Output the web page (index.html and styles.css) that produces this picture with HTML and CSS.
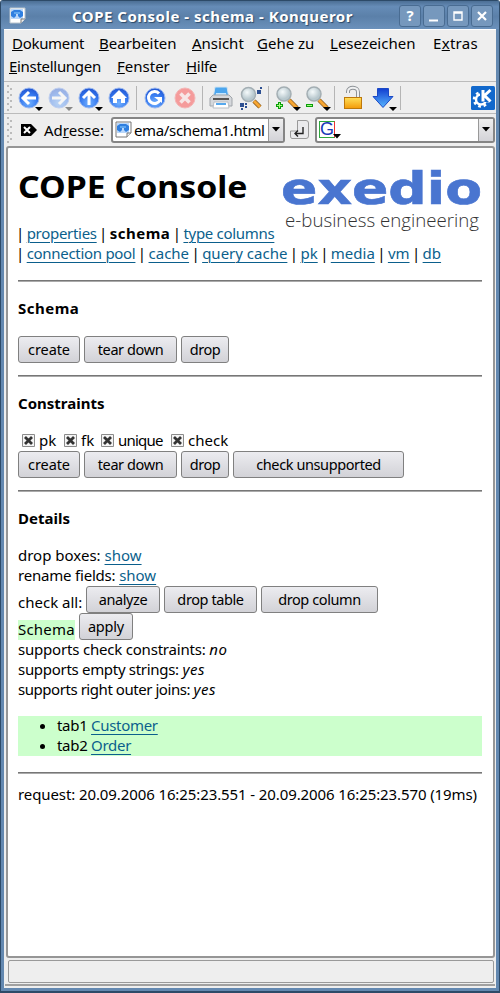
FILE: index.html
```html
<!DOCTYPE html>
<html lang="de">
<head>
<meta charset="utf-8">
<title>COPE Console - schema - Konqueror</title>
<link rel="stylesheet" href="styles.css">
</head>
<body>
<div class="window">
<header class="titlebar">
  <svg class="docicon" width="17" height="17" viewBox="0 0 17 17"><path d="M1 1H16V12L12 16H1Z" fill="#fff" stroke="#b8c3cc"/><path d="M2 2H14V12H2Z" fill="#b9d7fa"/><path d="M2 9V5L5 3H11L14 5V9L11 11L9 9V7H7V9L5 11Z" fill="#2f7fe0"/><path d="M5 6H11" stroke="#8fd0ff"/><path d="M12 16V12H16" fill="#eee" stroke="#777"/></svg>
  <span class="caption">COPE Console - schema - Konqueror</span>
  <div class="winbtns">
    <span class="wb">?</span>
    <span class="wb"><svg width="20" height="20"><path d="M5 14.500H14" stroke="#fff" stroke-width="2"/></svg></span>
    <span class="wb"><svg width="20" height="20"><path d="M6 6H14V14H6ZM6 7H14" fill="none" stroke="#fff" stroke-width="1.400"/></svg></span>
    <span class="wb"><svg width="20" height="20"><path d="M6 6L14 14M14 6L6 14" stroke="#fff" stroke-width="2.200"/></svg></span>
  </div>
</header>
<div class="inside">
<nav class="menu">
  <div class="menurow r1"><span class="t3"><u>D</u>okument</span><span><u>B</u>earbeiten</span><span><u>A</u>nsicht</span><span><u>G</u>ehe zu</span><span><u>L</u>esezeichen</span><span class="w3">E<u>x</u>tras</span></div>
  <div class="menurow r2"><span class="t3"><u>E</u>instellungen</span><span><u>F</u>enster</span><span class="t3"><u>H</u>ilfe</span></div>
</nav>
<svg width="0" height="0" class="defs"><defs>
  <radialGradient id="ball" cx=".5" cy=".75" r=".75"><stop offset="0" stop-color="#72b1ff"/><stop offset=".6" stop-color="#3477ee"/><stop offset="1" stop-color="#2053cf"/></radialGradient>
  <linearGradient id="gold" x1="0" y1="0" x2="0" y2="1"><stop offset="0" stop-color="#ffe05a"/><stop offset="1" stop-color="#f39a08"/></linearGradient>
  <linearGradient id="blue" x1="0" y1="0" x2="0" y2="1"><stop offset="0" stop-color="#123ed0"/><stop offset="1" stop-color="#58b6ff"/></linearGradient>
  <radialGradient id="lens" cx=".4" cy=".35"><stop offset="0" stop-color="#f5fafb"/><stop offset="1" stop-color="#b8c8ce"/></radialGradient>
</defs></svg>
<div class="toolbar">
  <i class="grip"></i>
  <svg class="tool" viewBox="0 0 30 30"><circle cx="15" cy="15" r="10" fill="url(#ball)" stroke="#9cb9ef"/><path d="M22 15H10M15 9L9 15L15 21" fill="none" stroke="#fff" stroke-width="3"/><path d="M21 24H29L25 28Z"/></svg>
  <svg class="tool" viewBox="0 0 30 30"><g opacity=".42"><circle cx="15" cy="15" r="10" fill="url(#ball)" stroke="#7fa5f0"/><path d="M8 15H20M15 9L21 15L15 21" fill="none" stroke="#fff" stroke-width="3"/><path d="M21 24H29L25 28Z"/></g></svg>
  <svg class="tool" viewBox="0 0 30 30"><circle cx="15" cy="15" r="10" fill="url(#ball)" stroke="#9cb9ef"/><path d="M15 22V10M9 15L15 9L21 15" fill="none" stroke="#fff" stroke-width="3"/><path d="M21 24H29L25 28Z"/></svg>
  <svg class="tool" viewBox="0 0 30 30"><circle cx="15" cy="15" r="10" fill="url(#ball)" stroke="#9cb9ef"/><path d="M15 7L23 15H21V20H17V16H13V20H9V15H7Z" fill="#fff"/></svg>
  <i class="sep"></i>
  <svg class="tool" viewBox="0 0 30 30"><circle cx="15" cy="15" r="10" fill="url(#ball)" stroke="#9cb9ef"/><path d="M19 10.500A6 6 0 1 0 20 17" fill="none" stroke="#fff" stroke-width="3"/><path d="M14 14H22V20Z" fill="#fff"/></svg>
  <svg class="tool" viewBox="0 0 30 30"><circle cx="15" cy="15" r="10" fill="#f59b9b" stroke="#f3b6b6"/><path d="M10.500 10.500L19.500 19.500M19.500 10.500L10.500 19.500" stroke="#f7e6e6" stroke-width="3.600"/></svg>
  <i class="sep"></i>
  <svg class="tool" viewBox="0 0 30 30"><path d="M9 4H21L23 15H7Z" fill="#4ca6ee" stroke="#d5e5f0"/><path d="M10 10H20L21 15H9Z" fill="#c5e6ff"/><path d="M4 15L7 12H23L26 15V23H4Z" fill="#d5d8dc" stroke="#a0a5aa"/><path d="M7 16H23" stroke="#555" stroke-width="2"/><path d="M8 19H22L23 25H7Z" fill="#fff" stroke="#b8bec5"/><path d="M10 21H20" stroke="#56a9ee" stroke-width="2"/></svg>
  <svg class="tool" viewBox="0 0 30 30"><path d="M18 18L24 24" stroke="#8a5a1c" stroke-width="4.500"/><path d="M18 18L24 24" stroke="#f7a632" stroke-width="3"/><circle cx="12.500" cy="11.500" r="7" fill="url(#lens)" stroke="#a3aeb3" stroke-width="1.500"/><path d="M4 20H8V24H4ZM9 23H11V25H9ZM9 20H11V22H9ZM5 25H7V27H5ZM21 7H25V11H21ZM24 4H26V6H24Z" fill="#2d4f91"/></svg>
  <i class="sep"></i>
  <svg class="tool" viewBox="0 0 30 30"><path d="M17 17L25 25" stroke="#8a5a1c" stroke-width="4.500"/><path d="M17 17L25 25" stroke="#f7a632" stroke-width="3"/><circle cx="12" cy="11" r="7" fill="url(#lens)" stroke="#a3aeb3" stroke-width="1.500"/><path d="M7.500 19V26M4 22.500H11" stroke="#0a9f0a" stroke-width="3"/><path d="M7.500 20V25M5 22.500H10" stroke="#a8fb80"/><path d="M21 24H29L25 28Z"/></svg>
  <svg class="tool" viewBox="0 0 30 30"><path d="M17 17L25 25" stroke="#8a5a1c" stroke-width="4.500"/><path d="M17 17L25 25" stroke="#f7a632" stroke-width="3"/><circle cx="12" cy="11" r="7" fill="url(#lens)" stroke="#a3aeb3" stroke-width="1.500"/><path d="M4 22.500H11" stroke="#0a9f0a" stroke-width="3"/><path d="M5 22.500H10" stroke="#a8fb80"/><path d="M21 24H29L25 28Z"/></svg>
  <i class="sep"></i>
  <svg class="tool" viewBox="0 0 30 30"><path d="M10 10V8.500C10 3.500 20 3.500 20 9V15" fill="none" stroke="#8d9297" stroke-width="4"/><path d="M10 10V8.500C10 3.500 20 3.500 20 9V15" fill="none" stroke="#f0f1f2" stroke-width="2"/><rect x="6.500" y="14.500" width="17" height="11" fill="url(#gold)" stroke="#bd780b"/></svg>
  <svg class="tool" viewBox="0 0 30 30"><path d="M9.500 5.500H20.500V13.500H25L15 24.500L5 13.500H9.500Z" fill="url(#blue)" stroke="#1b49c6"/><path d="M21 24H29L25 28Z"/></svg>
  <i class="sep"></i>
  <svg class="kde" width="24" height="24" viewBox="0 0 24 24"><rect width="24" height="24" rx="1.500" fill="#1168cc"/><circle cx="10" cy="13.500" r="5" fill="none" stroke="#fff" stroke-width="2.500"/><circle cx="10" cy="13.500" r="7" fill="none" stroke="#fff" stroke-width="2.500" stroke-dasharray="2.750 2.750"/><path d="M9 3H24V16H9Z" fill="#1168cc"/><path d="M12 4V15.500M19.500 4L13.500 9.500L19.500 15.500" fill="none" stroke="#fff" stroke-width="3"/></svg>
</div>
<div class="address">
  <i class="grip"></i>
  <svg class="clear" width="16" height="12" viewBox="0 0 16 12"><path d="M0 0H10L16 6L10 12H0Z"/><path d="M3 3L9 9M9 3L3 9" stroke="#fff" stroke-width="2"/></svg>
  <span class="addrlabel">Ad<u>r</u>esse:</span>
  <div class="combo url">
    <svg class="docicon" width="17" height="17" viewBox="0 0 17 17"><path d="M1 1H16V12L12 16H1Z" fill="#fff" stroke="#777"/><path d="M2 2H14V12H2Z" fill="#b9d7fa"/><path d="M2 9V5L5 3H11L14 5V9L11 11L9 9V7H7V9L5 11Z" fill="#2f7fe0"/><path d="M5 6H11" stroke="#8fd0ff"/><path d="M12 16V12H16" fill="#eee" stroke="#777"/></svg>
    <span class="urltext">ema/schema1.html</span><b class="drop"><svg width="8" height="5"><path d="M0 0H8L4 4.500Z"/></svg></b>
  </div>
  <span class="go"><svg width="19" height="19" viewBox="0 0 19 19"><path d="M7.500 .5H16Q18.500 .5 18.500 3V16Q18.500 18.500 16 18.500H2Q.5 18.500 .5 16V11H7.500Z" fill="#eaeaec" stroke="#999"/><path d="M13 7V13.500H5M8 10.500L5 13.500L8 16.500" fill="none" stroke="#222" stroke-width="1.400"/></svg></span>
  <div class="combo search"><span class="google">G</span><svg class="gdrop" width="8" height="5"><path d="M0 0H8L4 4.500Z"/></svg><b class="drop"><svg width="8" height="5"><path d="M0 0H8L4 4.500Z"/></svg></b></div>
</div>
<main class="page">
  <div class="head">
    <h1>COPE Console</h1>
    <svg class="logo" width="200" height="66" viewBox="0 0 200 66"><text class="brand" x="-1" y="35" textLength="201" lengthAdjust="spacingAndGlyphs">exedio</text><text class="tagline" x="3" y="58" textLength="194" lengthAdjust="spacingAndGlyphs">e-business engineering</text></svg>
  </div>
  <div class="links">
    <div class="l1"><i class="p">|</i> <a class="t3">properties</a> <i class="p">|</i> <strong class="w5">schema</strong> <i class="p">|</i> <a class="t3">type columns</a></div>
    <div class="l2"><i class="p">|</i> <a class="t3">connection pool</a> <i class="p">|</i> <a>cache</a> <i class="p">|</i> <a>query cache</a> <i class="p">|</i> <a>pk</a> <i class="p">|</i> <a>media</a> <i class="p">|</i> <a>vm</a> <i class="p">|</i> <a>db</a></div>
  </div>
  <hr>
  <h2 class="w5">Schema</h2>
  <div class="buttons"><button class="w62">create</button><button class="w93">tear down</button><button class="w48">drop</button></div>
  <hr>
  <h2>Constraints</h2>
  <div class="checks">
    <label><svg class="box" viewBox="0 0 13 13"><path d="M.5 .5H12.500V12.500H.5Z" fill="#f4f4f4" stroke="#8b8b8b"/><path d="M3 3L10 10M10 3L3 10" stroke="#333" stroke-width="2.800"/></svg>pk</label>
    <label><svg class="box" viewBox="0 0 13 13"><path d="M.5 .5H12.500V12.500H.5Z" fill="#f4f4f4" stroke="#8b8b8b"/><path d="M3 3L10 10M10 3L3 10" stroke="#333" stroke-width="2.800"/></svg>fk</label>
    <label class="t8"><svg class="box" viewBox="0 0 13 13"><path d="M.5 .5H12.500V12.500H.5Z" fill="#f4f4f4" stroke="#8b8b8b"/><path d="M3 3L10 10M10 3L3 10" stroke="#333" stroke-width="2.800"/></svg>unique</label>
    <label><svg class="box" viewBox="0 0 13 13"><path d="M.5 .5H12.500V12.500H.5Z" fill="#f4f4f4" stroke="#8b8b8b"/><path d="M3 3L10 10M10 3L3 10" stroke="#333" stroke-width="2.800"/></svg>check</label>
  </div>
  <div class="buttons"><button class="w62">create</button><button class="w93">tear down</button><button class="w48">drop</button><button class="w171">check unsupported</button></div>
  <hr>
  <h2>Details</h2>
  <div class="line">drop boxes: <a>show</a></div>
  <div class="line"><span class="t2">rename fields: </span><a>show</a></div>
  <div class="buttons"><span class="lead all">check all:</span><button class="w74">analyze</button><button class="w93">drop table</button><button class="w117">drop column</button></div>
  <div class="buttons"><span class="lead ok">Schema</span><button class="w54">apply</button></div>
  <div class="line"><span class="t2">supports check constraints: </span><em>no</em></div>
  <div class="line"><span class="t3">supports empty strings: </span><em>yes</em></div>
  <div class="line"><span class="t45">supports right outer joins: </span><em>yes</em></div>
  <ul><li class="t3">tab1 <a>Customer</a></li><li class="t3">tab2 <a>Order</a></li></ul>
  <hr>
  <div class="request">request: 20.09.2006 16:25:23.551 - 20.09.2006 16:25:23.570 (19ms)</div>
</main>
<footer class="status"><div></div></footer>
</div>
</div>
</body>
</html>
```
FILE: styles.css
```css
* { box-sizing: border-box; }
body { margin: 0; font: 15px/20px "Noto Sans", sans-serif; color: #000; }
svg { display: block; }
.window { width: 500px; height: 993px; background: #6388b0; border: 1px solid #2d4a68; border-width: 1px 1px 2px; border-radius: 3px 3px 0 0; padding: 0 3px 3px; display: flex; flex-direction: column; }
.titlebar { height: 28px; margin: 0 -3px; padding: 2px 5px 0 8px; background: linear-gradient(#4c6f95, #668cb7 20%, #5b80a9 55%, #6b91bb); display: flex; align-items: center; flex: none; }
.titlebar .docicon { margin-top: -2px; }
.caption { flex: 1; padding-left: 46px; color: #fff; font-weight: bold; font-size: 15px; letter-spacing: .5px; white-space: nowrap; text-shadow: 1px 1px 1px #2c4868; }
.winbtns { display: flex; gap: 2px; margin-right: 1px; }
.wb { width: 22px; height: 22px; border: 1px solid #496c92; border-radius: 3px; background: #7698bd; color: #fff; font-weight: bold; text-align: center; line-height: 19px; }
.winbtns { margin-top: -1px; }
.inside { flex: 1; background: #eee; display: flex; flex-direction: column; border-top: 1px solid #fff; min-height: 0; }
.menu { height: 51px; padding-top: 2px; flex: none; }
.menurow { display: grid; height: 23px; line-height: 23px; white-space: nowrap; }
.r1 { grid-template-columns: 87px 93px 65px 73px 103px auto; padding-left: 8px; }
.r2 { grid-template-columns: 108px 69px auto; padding-left: 5px; }
.t2 { letter-spacing: -.2px; }
.t3 { letter-spacing: -.3px; }
.t45 { letter-spacing: -.45px; }
.t8 { letter-spacing: -.8px; }
.w3 { letter-spacing: .3px; }
.w5 { letter-spacing: .5px; }
.defs { position: absolute; }
.toolbar { height: 33px; border-top: 1px solid #bbb; border-bottom: 1px solid #bbb; display: flex; align-items: center; flex: none; padding-right: 1px; }
.grip { width: 5px; height: 26px; margin: 0 2px 0 3px; background-image: radial-gradient(circle at 1px 1px, #bbb 1px, transparent 1.2px), radial-gradient(circle at 4px 4px, #bbb 1px, transparent 1.2px); background-size: 5px 6px; flex: none; }
.tool { width: 30px; height: 30px; flex: none; }
.sep { width: 1px; height: 24px; margin: 0 3px 0 2px; background: #b5b5b5; flex: none; }
.kde { margin-left: auto; }
.address { height: 32px; display: flex; align-items: center; flex: none; padding: 0 1px 1px 0; }
.clear { margin-left: 7px; }
.addrlabel { width: 67px; margin-left: 7px; }
.combo { height: 26px; border: 2px solid #858585; border-radius: 3px; background: #fff; display: flex; align-items: center; }
.url { width: 174px; padding-left: 2px; }
.urltext { padding-left: 2px; white-space: nowrap; letter-spacing: -.35px; }
.drop { width: 15px; height: 22px; margin-left: auto; background: linear-gradient(#eee, #d3d3d8); border-left: 1px solid #999; display: flex; align-items: center; justify-content: center; flex: none; }
.go { width: 19px; margin: 0 6px 0 5px; }
.search { flex: 1; padding-left: 2px; }
.google { width: 16px; height: 17px; border: 1px solid #2fa83d; border-right-color: #e33; color: #1738b8; font: 18px/15px "Liberation Sans", sans-serif; text-align: center; }
.gdrop { margin: 14px 0 0 -2px; }
.page { height: 812px; border: 2px solid #969696; border-radius: 3px; margin: 0 1px 0 2px; padding: 0 11px 0 10px; background: #fff; flex: none; }
.head { display: flex; justify-content: space-between; height: 75px; }
h1 { width: 230px; margin: 18px 0 0; font-size: 31px; line-height: 40px; white-space: nowrap; transform: scaleX(1.09); transform-origin: left; }
.logo { margin-top: 21px; flex: none; overflow: visible; }
.brand { font: bold 45px "DejaVu Sans", sans-serif; fill: #4975d0; stroke: #4975d0; stroke-width: .6px; }
.tagline { font: 300 18px "Open Sans", sans-serif; fill: #333; }
.links { white-space: nowrap; height: 57px; }
.p { font-style: normal; margin: 0 -1.5px; }
.p:first-child { margin-left: -2px; }
a { color: #0b5f8c; text-decoration: underline; text-underline-offset: 3px; text-decoration-thickness: 1px; }
hr { height: 2px; margin: 0; border: 0; border-top: 1px solid #777; border-bottom: 1px solid #aaa; }
h2 { margin: 16px 0 18px; font-size: 15px; line-height: 20px; }
.buttons { display: flex; gap: 4px; height: 27px; }
.buttons + hr { margin-top: 12px; }
button { height: 27px; padding: 0 0 2px; border: 1px solid #808080; border-radius: 3px; background: linear-gradient(#ececf0, #d2d2d7); color: #000; font: 14.5px "Noto Sans", sans-serif; letter-spacing: -.4px; white-space: nowrap; }
.w48 { width: 48px; } .w54 { width: 54px; } .w62 { width: 62px; letter-spacing: -.1px; } .w74 { width: 74px; } .w93 { width: 93px; } .w117 { width: 117px; } .w171 { width: 171px; }
.w54 { letter-spacing: -.2px; }
.checks { display: grid; grid-template-columns: 42px 37px 70px auto; height: 20px; padding-left: 4px; line-height: 18px; }
.checks label { display: flex; align-items: center; gap: 4px; height: 18px; }
.box { width: 13px; height: 13px; flex: none; }
.line { white-space: nowrap; line-height: 18px; padding-bottom: 2px; }
em { letter-spacing: .5px; }
.lead { height: 20px; margin-top: 7px; line-height: 19px; white-space: nowrap; }
.all { width: 64px; } .ok { width: 57px; background: #cfc; letter-spacing: .2px; }
ul { margin: 16px 0; padding-left: 39px; background: #cfc; }
li { line-height: 18px; padding-bottom: 2px; }
.request { margin-top: 10px; white-space: nowrap; letter-spacing: -.1px; }
.status { flex: 1; padding: 2px 2px 0 4px; }
.status div { height: 23px; border: 1px solid #999; border-radius: 2px; }
.status::after { content: ""; display: block; height: 2px; margin: 1px -1px 0 -3px; background: #a0a0a0; }
```
